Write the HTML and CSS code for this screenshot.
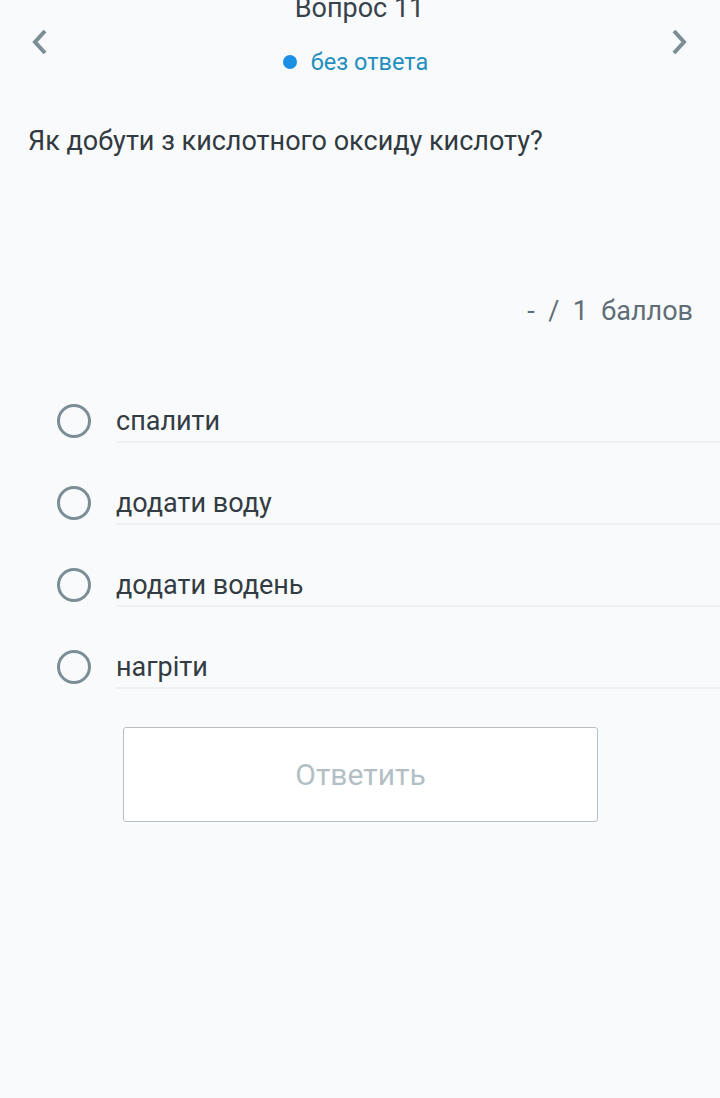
FILE: index.html
```html
<!DOCTYPE html>
<html lang="uk">
<head>
<meta charset="utf-8">
<link rel="stylesheet" href="styles.css">
</head>
<body>
<div class="page">
  <header class="header">
    <button class="nav">
      <svg width="20" height="28" viewBox="0 0 20 28"><path d="M15 3 L5 14 L15 25" fill="none" stroke="#7b8d95" stroke-width="4"/></svg>
    </button>
    <div class="title-block">
      <div class="title">Вопрос 11</div>
      <div class="status"><span class="dot"></span><span>без ответа</span></div>
    </div>
    <button class="nav">
      <svg width="20" height="28" viewBox="0 0 20 28"><path d="M5 3 L15 14 L5 25" fill="none" stroke="#7b8d95" stroke-width="4"/></svg>
    </button>
  </header>
  <div class="question">Як добути з кислотного оксиду кислоту?</div>
  <div class="score">-&nbsp; /&nbsp; 1&nbsp; баллов</div>
  <ul class="options">
    <li class="option"><span class="radio"></span><span class="label">спалити</span></li>
    <li class="option"><span class="radio"></span><span class="label">додати воду</span></li>
    <li class="option"><span class="radio"></span><span class="label">додати водень</span></li>
    <li class="option"><span class="radio"></span><span class="label">нагріти</span></li>
  </ul>
  <div class="actions"><button class="submit">Ответить</button></div>
</div>
</body>
</html>
```
FILE: styles.css
```css
html, body {
  margin: 0;
  padding: 0;
  background: #f9fafc;
  font-family: Roboto, "Noto Sans", sans-serif;
}
.page {
  height: 1098px;
  overflow: hidden;
}
.header {
  display: flex;
  align-items: flex-start;
  justify-content: space-between;
  padding: 0 29px 0 28px;
  margin-top: -10px;
}
.nav {
  background: none;
  border: 0;
  padding: 0;
  margin-top: 38px;
  width: 24px;
  height: 28px;
  display: flex;
  align-items: center;
  justify-content: center;
}
.title-block {
  display: flex;
  flex-direction: column;
  align-items: center;
}
.title {
  font-size: 27px;
  line-height: 36px;
  color: #37424a;
}
.status {
  display: flex;
  align-items: center;
  gap: 14px;
  margin-top: 21px;
  font-size: 23.5px;
  line-height: 30px;
  color: #1f8ec0;
  margin-left: -8px;
}
.dot {
  width: 14px;
  height: 14px;
  border-radius: 50%;
  background: #1a8fe3;
}
.question {
  margin: 47px 0 0 28px;
  font-size: 27px;
  line-height: 34px;
  color: #313a40;
}
.score {
  margin-top: 136px;
  padding-right: 27px;
  text-align: right;
  font-size: 27px;
  line-height: 34px;
  color: #5f6e76;
}
.options {
  list-style: none;
  margin: 75px 0 0 0;
  padding: 0 0 0 57px;
}
.option {
  display: flex;
  align-items: center;
  height: 82px;
}
.radio {
  width: 34px;
  height: 34px;
  box-sizing: border-box;
  border: 3.5px solid #7b8d95;
  border-radius: 50%;
  margin-right: 25px;
  flex: none;
  align-self: flex-start;
  margin-top: 1px;
}
.label {
  flex: 1;
  font-size: 27px;
  line-height: 36px;
  color: #333c42;
  border-bottom: 2px solid #eef0f3;
  padding-bottom: 2px;
  align-self: flex-start;
}
.actions {
  padding-left: 123px;
  margin-top: -4px;
}
.submit {
  width: 475px;
  height: 95px;
  background: #fff;
  border: 1px solid #b9c0c4;
  border-radius: 3px;
  font-family: Roboto, "Noto Sans", sans-serif;
  font-size: 30px;
  color: #b3bfc5;
}
```
